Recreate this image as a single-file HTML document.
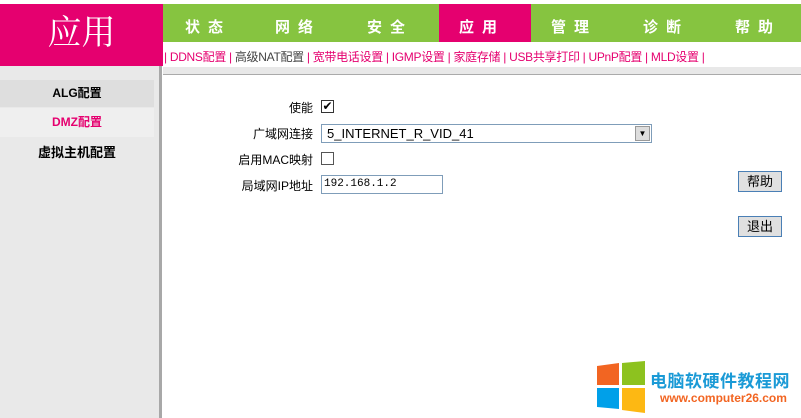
<!DOCTYPE html>
<html><head><meta charset="utf-8"><style>
*{margin:0;padding:0;box-sizing:border-box}
body{width:801px;height:418px;overflow:hidden;background:#fff;font-family:"Liberation Sans","Noto Sans CJK SC",sans-serif;position:relative}
.a{position:absolute}
.nav span{position:absolute;top:12px;color:#fff;font-weight:bold;font-size:15px;letter-spacing:8px}
.sub{top:48px;left:164px;font-size:12px;color:#e5006f;white-space:nowrap;letter-spacing:-0.3px}
.sub b{font-weight:normal;color:#e5006f;margin:0 3px}
.lbl{font-size:12px;color:#000;text-align:right;width:150px;left:163px}
.btn{width:44px;height:21px;border:1px solid #4a7fb5;background:#e0e0e0;font-size:13px;text-align:center;line-height:19px;left:738px}
</style></head><body>
<div class="a" style="left:0;top:4px;width:163px;height:62px;background:#e5006f;color:#fff;font-size:34px;font-family:'Liberation Serif','Noto Serif CJK SC',serif;text-align:center;line-height:60px">应用</div>
<div class="a nav" style="left:163px;top:4px;width:638px;height:38px;background:#86c440">
<div class="a" style="left:276px;top:0;width:92px;height:38px;background:#e5006f"></div>
<span style="left:22px">状态</span><span style="left:112px">网络</span><span style="left:204px">安全</span><span style="left:296px">应用</span><span style="left:388px">管理</span><span style="left:480px">诊断</span><span style="left:572px">帮助</span>
</div>
<div class="a sub">|<b>DDNS配置</b>|<b style="color:#444">高级NAT配置</b>|<b>宽带电话设置</b>|<b>IGMP设置</b>|<b>家庭存储</b>|<b>USB共享打印</b>|<b>UPnP配置</b>|<b>MLD设置</b>|</div>
<div class="a" style="left:163px;top:67px;width:638px;height:8px;background:#e8e8e8;border-bottom:1px solid #aaa"></div>
<div class="a" style="left:0;top:66px;width:162px;height:352px;background:#e9e9e9;border-right:3px solid #a8a8a8"></div>
<div class="a" style="left:0;top:80px;width:154px;height:27px;background:#dedede;font-size:12px;font-weight:bold;text-align:center;line-height:27px">ALG配置</div>
<div class="a" style="left:0;top:108px;width:154px;height:29px;background:#efefef;color:#e5006f;font-size:12px;font-weight:bold;text-align:center;line-height:29px">DMZ配置</div>
<div class="a" style="left:0;top:138px;width:154px;height:29px;font-size:13px;font-weight:bold;text-align:center;line-height:29px">虚拟主机配置</div>
<div class="a lbl" style="top:99px">使能</div>
<div class="a" style="left:321px;top:100px;width:13px;height:13px;border:1px solid #333;font-size:12px;line-height:11px;text-align:center">✔</div>
<div class="a lbl" style="top:125px">广域网连接</div>
<div class="a" style="left:321px;top:124px;width:331px;height:19px;border:1px solid #7f9db9;font-size:13px;line-height:17px;padding-left:5px">5_INTERNET_R_VID_41
<div class="a" style="right:1px;top:1px;width:15px;height:15px;background:#ddd;border:1px solid #999;font-size:8px;text-align:center;line-height:13px">▼</div></div>
<div class="a lbl" style="top:151px">启用MAC映射</div>
<div class="a" style="left:321px;top:152px;width:13px;height:13px;border:1px solid #555"></div>
<div class="a lbl" style="top:177px">局域网IP地址</div>
<div class="a" style="left:321px;top:175px;width:122px;height:19px;border:1px solid #7f9db9;font-size:11px;line-height:17px;padding-left:2px;font-family:'Liberation Mono',monospace">192.168.1.2</div>
<div class="a btn" style="top:171px">帮助</div>
<div class="a btn" style="top:216px">退出</div>
<svg class="a" style="left:597px;top:361px" width="50" height="52"><polygon points="0,5 22,2 22,24 0,24" fill="#f26522"/><polygon points="25,2 48,0 48,24 25,24" fill="#8dc21f"/><polygon points="0,27 22,27 22,48 0,46" fill="#00a0e9"/><polygon points="25,27 48,27 48,52 25,49" fill="#fdb813"/></svg>
<div class="a" style="left:650px;top:367px;font-size:17px;font-weight:bold;color:#1a9ad6;letter-spacing:0.5px">电脑软硬件教程网</div>
<div class="a" style="left:660px;top:391px;font-size:12px;font-weight:bold;color:#f26522">www.computer26.com</div>
</body></html>
